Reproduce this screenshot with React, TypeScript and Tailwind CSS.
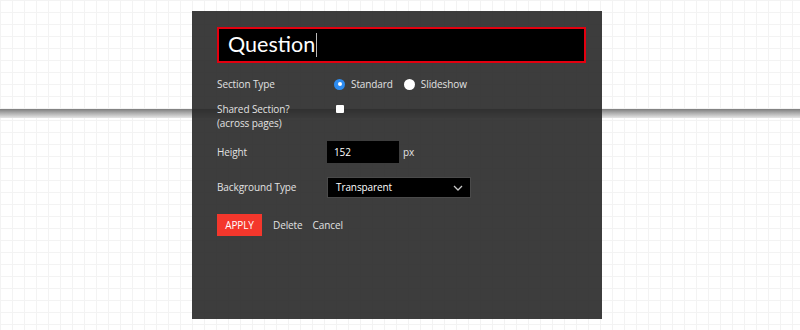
import React from "react";

export default function App() {
  const font = { fontFamily: "'Open Sans', Lato, sans-serif" };
  return (
    <div
      className="relative w-[800px] h-[330px] overflow-hidden bg-white bg-[linear-gradient(to_right,#f3f3f3_1px,transparent_1px),linear-gradient(to_bottom,#f3f3f3_1px,transparent_1px)] bg-[size:12px_12px]"
      style={font}
    >
      <div className="pt-[109px]">
        <div className="h-[9px] w-full bg-[linear-gradient(to_bottom,#7d7d7d,#a8a8a8_40%,#e6e6e6)]" />
      </div>

      <div className="absolute left-[192px] top-[11px] w-[410px] h-[308px] bg-[rgba(40,40,40,0.9)] pl-[25px] pt-[16px] text-[10px] tracking-[-0.1px] text-[#e2e2e2]">
        <div className="w-[369px] h-[36px] border-2 border-[#e3000f] bg-black flex items-center pl-[9px]">
          <span className="text-[21.5px] tracking-normal text-white leading-none" style={{ fontFamily: "Lato, sans-serif" }}>Question</span>
          <span className="ml-[1px] w-px h-[24px] bg-[#bbb]" />
        </div>

        <div className="mt-[11px] h-[20px] flex items-center">
          <div className="w-[110px]">Section Type</div>
          <div className="flex items-center ml-[7px]">
            <span className="w-[11px] h-[11px] rounded-full bg-[#2d8cf0] flex items-center justify-center">
              <span className="w-[4px] h-[4px] rounded-full bg-white" />
            </span>
            <span className="ml-[6px]">Standard</span>
            <span className="ml-[11px] w-[11px] h-[11px] rounded-full bg-white" />
            <span className="ml-[6px]">Slideshow</span>
          </div>
        </div>

        <div className="mt-[8px] flex items-start">
          <div className="w-[110px] leading-[14px]">
            <div>Shared Section?</div>
            <div>(across pages)</div>
          </div>
          <span className="ml-[9px] mt-[3px] w-[8px] h-[8px] bg-white rounded-[1px]" />
        </div>

        <div className="mt-[11px] h-[22px] flex items-center">
          <div className="w-[110px]">Height</div>
          <div className="w-[72px] h-[22px] bg-black flex items-center pl-[7px] text-white">152</div>
          <span className="ml-[4px]">px</span>
        </div>

        <div className="mt-[14px] h-[21px] flex items-center">
          <div className="w-[110px]">Background Type</div>
          <div className="w-[144px] h-[21px] bg-black border border-[#4a4a4a] flex items-center justify-between pl-[8px] pr-[7px] text-white">
            <span>Transparent</span>
            <svg width="10" height="6" viewBox="0 0 10 6">
              <path d="M1 1 L5 5 L9 1" stroke="#c8c8c8" strokeWidth="1.3" fill="none" />
            </svg>
          </div>
        </div>

        <div className="mt-[16px] flex items-center">
          <div className="w-[45px] h-[22px] bg-[#f4372c] text-white flex items-center justify-center">APPLY</div>
          <span className="ml-[11px]">Delete</span>
          <span className="ml-[10px]">Cancel</span>
        </div>
      </div>
    </div>
  );
}
